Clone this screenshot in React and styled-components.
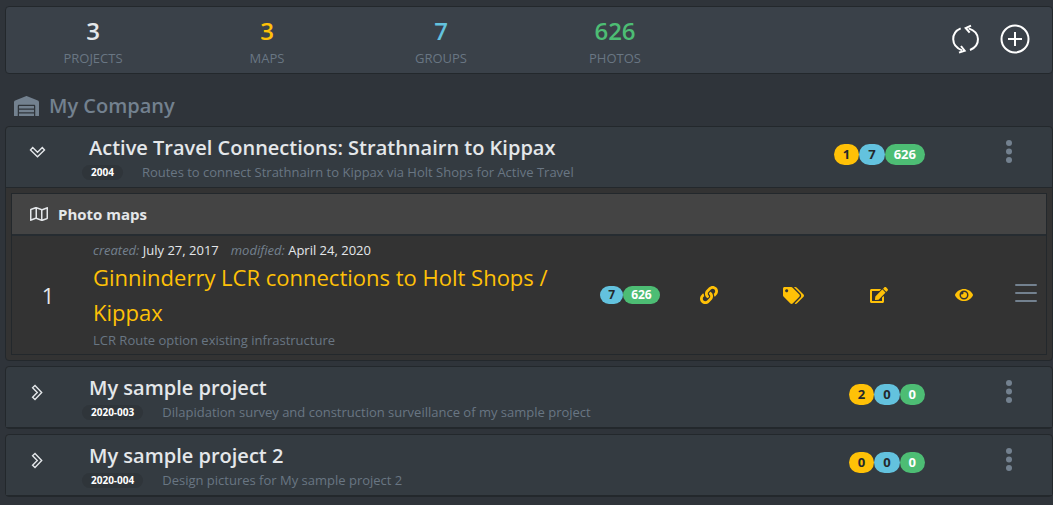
import React from 'react';
import styled, { createGlobalStyle } from 'styled-components';
import { FaWarehouse, FaRegMap, FaLink, FaTags, FaEdit, FaEye } from 'react-icons/fa';

const GlobalStyle = createGlobalStyle`
  * {
    box-sizing: border-box;
  }

  body {
    margin: 0;
    background-color: #2f343a;
    color: #e4e7ea;
    font-family: 'Open Sans', 'Noto Sans', sans-serif;
    font-size: 14px;
  }

  h1, h2, h3, h4, p, dl, dt, dd {
    margin: 0;
  }
`;

const colors = {
  light: '#e4e7ea',
  warning: '#ffc107',
  info: '#63c2de',
  success: '#4dbd74',
};

const Page = styled.main`
  padding: 6px 0 8px 5px;
`;

// Summary bar
const Summary = styled.section`
  display: flex;
  align-items: center;
  height: 68px;
  background-color: #3a4149;
  border: 1px solid #23282c;
  border-radius: 4px;
`;

const Stats = styled.dl`
  display: flex;
  flex: 1;
  padding-top: 4px;
`;

const Stat = styled.div`
  display: flex;
  flex-direction: column-reverse;
  flex: 0 0 174px;
  text-align: center;
`;

const StatValue = styled.dd`
  color: ${({ $tone }) => colors[$tone]};
  font-size: 24px;
  font-weight: 600;
  line-height: 32px;
`;

const StatLabel = styled.dt`
  color: #697683;
  font-size: 13px;
  line-height: 22px;
  text-transform: uppercase;
`;

const Actions = styled.div`
  display: flex;
  gap: 20px;
  padding: 0 22px 2px 0;
`;

const IconButton = styled.button`
  display: inline-flex;
  align-items: center;
  justify-content: center;
  padding: 0;
  border: 0;
  background: none;
  color: ${({ $color }) => $color || colors.light};
  font-size: ${({ $size }) => $size || 18}px;
  cursor: pointer;
`;

// Company heading
const Company = styled.h1`
  display: flex;
  align-items: center;
  gap: 10px;
  height: 52px;
  padding: 12px 0 0 9px;
  color: #73818f;
  font-size: 20px;
  font-weight: 600;
  line-height: 28px;

  svg {
    width: 25px;
    height: 20px;
  }
`;

// Project cards
const ProjectList = styled.div`
  display: flex;
  flex-direction: column;
  gap: 5px;
`;

const Project = styled.article`
  background-color: #333;
  border: 1px solid #23282c;
  border-radius: 4px;
`;

const ProjectHeader = styled.header`
  display: grid;
  grid-template-columns: 62px 1fr auto 127px;
  align-items: center;
  height: 61px;
  padding-bottom: 5px;
  background-color: #343b41;
  border-bottom: 1px solid #23282c;
  border-radius: 4px 4px 0 0;
`;

const ToggleButton = styled(IconButton)`
  padding-bottom: 5px;
`;

const ProjectMenuButton = styled(IconButton)`
  padding: 0 0 5px 40px;
`;

const ProjectText = styled.div`
  align-self: end;
`;

const ProjectTitle = styled.h2`
  color: ${colors.light};
  padding-left: 21px;
  font-size: 20px;
  font-weight: 600;
  line-height: 28px;
`;

const ProjectMeta = styled.div`
  display: flex;
  align-items: center;
  gap: 19px;
  padding-left: 14px;
  line-height: 20px;
`;

const Code = styled.span`
  padding: 0 9px;
  border-radius: 8px;
  background-color: #2f353a;
  color: #fff;
  font-size: 10px;
  font-weight: 700;
  line-height: 15px;
`;

const Muted = styled.p`
  color: #697683;
  font-size: 13px;
  line-height: 20px;
`;

const Badges = styled.div`
  display: flex;
  justify-content: center;
`;

const Badge = styled.span`
  padding: 0 ${({ $small }) => ($small ? 8 : 9)}px;
  border-radius: 11px;
  background-color: ${({ $tone }) => colors[$tone]};
  color: ${({ $tone }) => ($tone === 'success' ? '#fff' : '#23282c')};
  font-size: ${({ $small }) => ($small ? 12 : 13)}px;
  font-weight: 700;
  line-height: ${({ $small }) => ($small ? 18 : 21)}px;
`;

// Photo maps panel
const MapsPanel = styled.section`
  margin: 5px;
  border: 1px solid #23282c;
`;

const MapsHeader = styled.h3`
  display: flex;
  align-items: center;
  gap: 10px;
  height: 42px;
  padding-left: 18px;
  background-color: #444;
  border-bottom: 2px solid #262c31;
  font-size: 15px;
  font-weight: 700;
`;

const MapRow = styled.div`
  display: grid;
  grid-template-columns: 72px 1fr 72px repeat(4, 85px) 40px;
  align-items: center;
  min-height: 118px;
`;

const MapNumber = styled.span`
  font-size: 22px;
  text-align: center;
`;

const MapText = styled.div`
  padding-left: 9px;
`;

const Dates = styled.p`
  display: flex;
  gap: 12px;
  font-size: 13px;
  line-height: 20px;

  em {
    color: #73818f;
  }
`;

const MapTitle = styled.h4`
  color: ${colors.warning};
  font-size: 22px;
  font-weight: 400;
  line-height: 35px;
`;

const MapMenuButton = styled(IconButton)`
  padding-bottom: 5px;
`;

const RefreshIcon = () => (
  <svg width="29" height="30" viewBox="183 72 87 90" fill="none" stroke="#fff" strokeWidth="6">
    <path d="M212 85C182 98 181 138 216 151M240 150C272 137 273 97 236 85" />
    <path d="M213 138L224 152L207 158M243 77L227 84L239 98" />
  </svg>
);

const AddIcon = () => (
  <svg width="30" height="30" viewBox="0 0 30 30" fill="none" stroke="#fff" strokeWidth="2">
    <circle cx="15" cy="15" r="13.5" />
    <path d="M15 8v14M8 15h14" />
  </svg>
);

const ChevronIcon = ({ open }) => (
  <svg width="17" height="17" viewBox="0 0 17 17" fill="none" stroke="currentColor" strokeWidth="1.4">
    <path
      d={open ? 'M3.7 3.6L8.5 8.3L13.3 3.6L15.5 6L8.5 12.7L1.5 6Z' : 'M3.6 3.7L8.3 8.5L3.6 13.3L6 15.5L12.7 8.5L6 1.5Z'}
    />
  </svg>
);

const DotsIcon = () => (
  <svg width="6" height="24" viewBox="0 0 6 24" fill="currentColor">
    <circle cx="3" cy="3" r="3" />
    <circle cx="3" cy="11.5" r="3" />
    <circle cx="3" cy="20" r="3" />
  </svg>
);

const MenuIcon = () => (
  <svg width="24" height="20" viewBox="0 0 24 20" stroke="currentColor" strokeWidth="2" strokeLinecap="round">
    <path d="M2 2h20M2 10h20M2 18h20" />
  </svg>
);

const stats = [
  { label: 'Projects', value: 3, tone: 'light' },
  { label: 'Maps', value: 3, tone: 'warning' },
  { label: 'Groups', value: 7, tone: 'info' },
  { label: 'Photos', value: 626, tone: 'success' },
];

const mapActions = [
  { label: 'Copy link', icon: FaLink },
  { label: 'Tags', icon: FaTags, size: 21 },
  { label: 'Edit', icon: FaEdit },
  { label: 'View', icon: FaEye },
];

const projects = [
  {
    code: '2004',
    title: 'Active Travel Connections: Strathnairn to Kippax',
    description: 'Routes to connect Strathnairn to Kippax via Holt Shops for Active Travel',
    counts: [1, 7, 626],
    maps: [
      {
        created: 'July 27, 2017',
        modified: 'April 24, 2020',
        title: 'Ginninderry LCR connections to Holt Shops / Kippax',
        description: 'LCR Route option existing infrastructure',
        groups: 7,
        photos: 626,
      },
    ],
  },
  {
    code: '2020-003',
    title: 'My sample project',
    description: 'Dilapidation survey and construction surveillance of my sample project',
    counts: [2, 0, 0],
  },
  {
    code: '2020-004',
    title: 'My sample project 2',
    description: 'Design pictures for My sample project 2',
    counts: [0, 0, 0],
  },
];

const PhotoMaps = ({ maps }) => (
  <MapsPanel>
    <MapsHeader>
      <FaRegMap size={18} />
      Photo maps
    </MapsHeader>
    {maps.map((map, index) => (
      <MapRow key={map.title}>
        <MapNumber>{index + 1}</MapNumber>
        <MapText>
          <Dates>
            <span><em>created:</em> {map.created}</span>
            <span><em>modified:</em> {map.modified}</span>
          </Dates>
          <MapTitle>{map.title}</MapTitle>
          <Muted>{map.description}</Muted>
        </MapText>
        <Badges>
          <Badge $small $tone="info">{map.groups}</Badge>
          <Badge $small $tone="success">{map.photos}</Badge>
        </Badges>
        {mapActions.map(({ label, icon: Icon, size }) => (
          <IconButton key={label} type="button" aria-label={label} $color={colors.warning} $size={size}>
            <Icon />
          </IconButton>
        ))}
        <MapMenuButton type="button" aria-label="Map menu" $color="#73818f">
          <MenuIcon />
        </MapMenuButton>
      </MapRow>
    ))}
  </MapsPanel>
);

const App = () => {
  return (
    <>
      <GlobalStyle />
      <Page>
        <Summary>
          <Stats>
            {stats.map(({ label, value, tone }) => (
              <Stat key={label}>
                <StatLabel>{label}</StatLabel>
                <StatValue $tone={tone}>{value}</StatValue>
              </Stat>
            ))}
          </Stats>
          <Actions>
            <IconButton type="button" aria-label="Refresh"><RefreshIcon /></IconButton>
            <IconButton type="button" aria-label="Add project"><AddIcon /></IconButton>
          </Actions>
        </Summary>

        <Company>
          <FaWarehouse />
          My Company
        </Company>

        <ProjectList>
          {projects.map(({ code, title, description, counts, maps }) => (
            <Project key={code}>
              <ProjectHeader>
                <ToggleButton type="button" aria-label="Toggle project" aria-expanded={Boolean(maps)}>
                  <ChevronIcon open={Boolean(maps)} />
                </ToggleButton>
                <ProjectText>
                  <ProjectTitle>{title}</ProjectTitle>
                  <ProjectMeta>
                    <Code>{code}</Code>
                    <Muted>{description}</Muted>
                  </ProjectMeta>
                </ProjectText>
                <Badges>
                  <Badge $tone="warning">{counts[0]}</Badge>
                  <Badge $tone="info">{counts[1]}</Badge>
                  <Badge $tone="success">{counts[2]}</Badge>
                </Badges>
                <ProjectMenuButton type="button" aria-label="Project menu" $color="#73818f">
                  <DotsIcon />
                </ProjectMenuButton>
              </ProjectHeader>
              {maps && <PhotoMaps maps={maps} />}
            </Project>
          ))}
        </ProjectList>
      </Page>
    </>
  );
};

export default App;
